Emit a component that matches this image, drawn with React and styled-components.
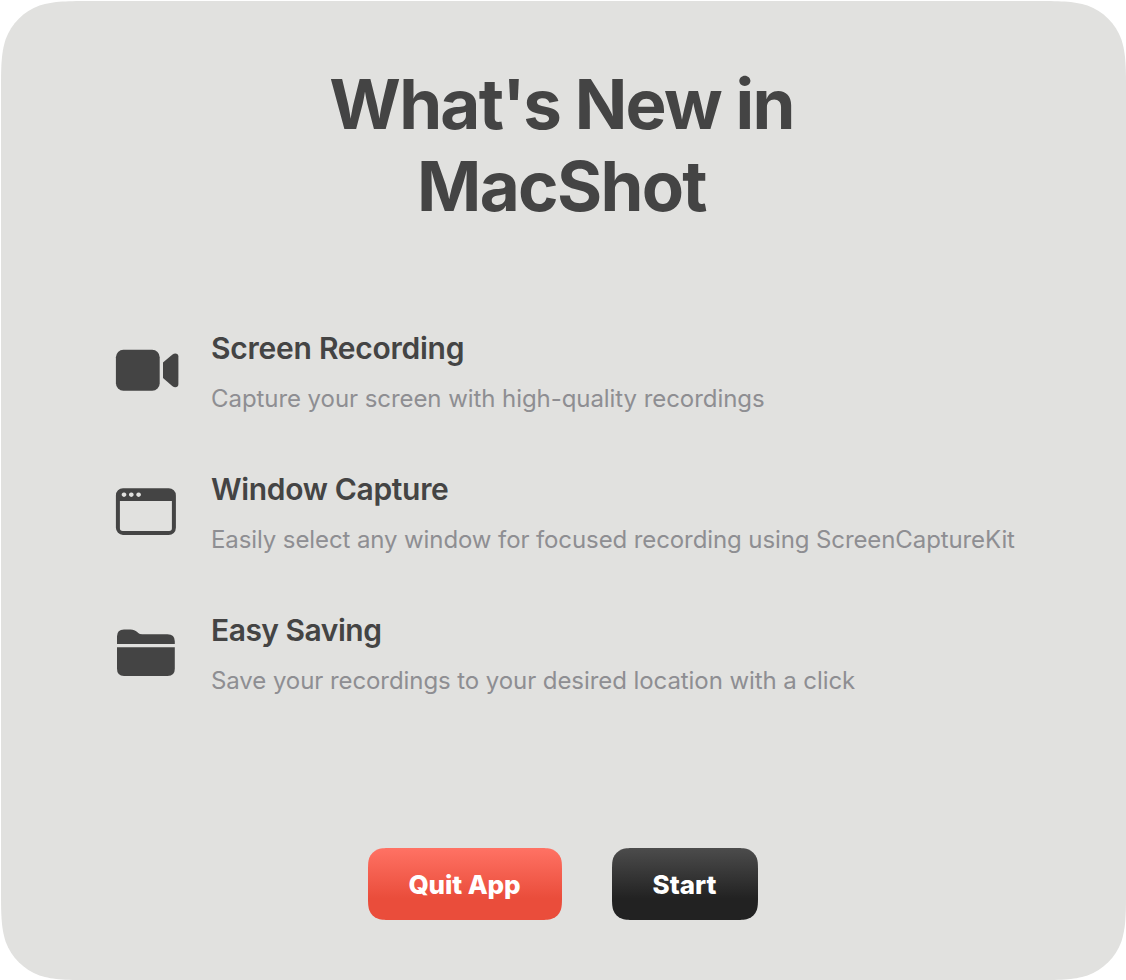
import React from 'react';
import styled, { createGlobalStyle } from 'styled-components';

const GlobalStyle = createGlobalStyle`
  * { box-sizing: border-box; }
  html, body { margin: 0; background: #ffffff; }
  body { font-family: Inter, "Liberation Sans", sans-serif; -webkit-font-smoothing: antialiased; }
`;

/* Rounded rectangle with continuous-curvature corners. */
const squircle = (w, h, r) => {
  const corner = [
    [1.5287, 0], [1.0885, 0], [0.8684, 0], [0.6315, 0.0749],
    [0.3728, 0.1691], [0.1691, 0.3728], [0.0749, 0.6315],
    [0, 0.8684], [0, 1.0885], [0, 1.5287],
  ];
  const seg = (pts, first) =>
    `${first}${pts[0]}C${pts.slice(1, 4).join(' ')}C${pts.slice(4, 7).join(' ')}C${pts.slice(7).join(' ')}`;
  const at = (fx, fy, flip) => {
    const list = corner.map(([a, b]) => [
      (fx ? w - a * r : a * r).toFixed(2),
      (fy ? h - b * r : b * r).toFixed(2),
    ].join(','));
    return flip ? list.reverse() : list;
  };
  return `path('${seg(at(1, 0, false), 'M')}${seg(at(1, 1, true), 'L')}${seg(at(0, 1, false), 'L')}${seg(at(0, 0, true), 'L')}Z')`;
};

const Panel = styled.main`
  display: flex;
  flex-direction: column;
  align-items: center;
  width: 1125px;
  height: 979px;
  margin: 1px 0 0 1px;
  padding-top: 62px;
  background: #e1e1df;
  color: #444444;
  clip-path: ${squircle(1125, 979, 61)};
`;

const Title = styled.h1`
  margin: 0;
  width: 600px;
  padding-right: 4px;
  font-size: 69px;
  font-weight: 720;
  line-height: 82px;
  text-align: center;
`;

const TitleLine = styled.span`
  display: block;
  letter-spacing: ${(p) => p.$tracking}px;
`;

const Features = styled.ul`
  display: flex;
  flex-direction: column;
  gap: 49px;
  width: 100%;
  margin: 99px 0 0;
  padding: 0 0 0 114px;
  list-style: none;
`;

const Feature = styled.li`
  display: flex;
  align-items: center;
  height: 92px;
`;

const FeatureIcon = styled.svg`
  flex: none;
  width: 64px;
  height: 56px;
  margin-right: 32px;
  margin-top: -4px;
  fill: #444444;
`;

const FeatureText = styled.div`
  white-space: nowrap;
`;

const FeatureName = styled.h2`
  margin: 0;
  font-size: 30px;
  font-weight: 600;
  line-height: 40px;
  letter-spacing: ${(p) => p.$tracking}px;
`;

const FeatureDetail = styled.p`
  margin: 13px 0 -1px;
  color: #8e8e92;
  font-size: 24px;
  line-height: 36px;
  letter-spacing: ${(p) => p.$tracking}px;
`;

const Actions = styled.div`
  display: flex;
  gap: 50px;
  margin: 148px 1px 0 0;
`;

const Button = styled.button`
  width: ${(p) => p.$width}px;
  height: 72px;
  padding: 1px 1px 0 0;
  border: 0;
  color: #ffffff;
  font: 800 26px/71px Inter, "Liberation Sans", sans-serif;
  letter-spacing: ${(p) => p.$tracking}px;
  background: linear-gradient(${(p) => p.$from}, ${(p) => p.$to} 70%);
  clip-path: ${(p) => squircle(p.$width, 72, 16)};
`;

const VideoIcon = () => (
  <FeatureIcon viewBox="0 0 64 56" aria-hidden="true">
    <rect x="0.9" y="7.8" width="43.8" height="41" rx="7.5" />
    <path d="M48 20.6 57.2 12.7C60 10.4 63.4 11.3 63.4 14.5V42C63.4 45.4 60 46.3 57.2 44L48 36Z" />
  </FeatureIcon>
);

const WindowIcon = () => (
  <FeatureIcon viewBox="0 0 64 56" aria-hidden="true">
    <path
      fillRule="evenodd"
      d="M8 5.2H53.7A7.2 7.2 0 0 1 60.9 12.4V44.8A7.2 7.2 0 0 1 53.7 52H8A7.2 7.2 0 0 1 .9 44.8V12.4A7.2 7.2 0 0 1 8 5.2ZM4.9 18V45A2.8 2.8 0 0 0 7.7 47.9H54A2.8 2.8 0 0 0 56.9 45V18ZM9 9.4a2.3 2.3 0 1 0 .01 0ZM16.3 9.4a2.3 2.3 0 1 0 .01 0ZM23.6 9.4a2.3 2.3 0 1 0 .01 0Z"
    />
  </FeatureIcon>
);

const FolderIcon = () => (
  <FeatureIcon viewBox="0 0 64 56" aria-hidden="true">
    <path d="M2 20V12.3Q2 5.4 9 5.4H15.5C18.6 5.4 20.2 6.3 22.2 8L23.2 8.9Q24.7 10.2 27.2 10.2H52.4Q59.8 10.2 59.8 17.3V20Z" />
    <path d="M2 23.2H59.8V44.8Q59.8 52 52.6 52H9Q2 52 2 44.8Z" />
  </FeatureIcon>
);

const features = [
  { Icon: VideoIcon, name: 'Screen Recording', nameTracking: -0.25, detail: 'Capture your screen with high-quality recordings', tracking: -0.065 },
  { Icon: WindowIcon, name: 'Window Capture', nameTracking: -0.33, detail: 'Easily select any window for focused recording using ScreenCaptureKit', tracking: -0.1 },
  { Icon: FolderIcon, name: 'Easy Saving', nameTracking: -0.5, detail: 'Save your recordings to your desired location with a click', tracking: -0.075 },
];

export default function App() {
  return (
    <>
      <GlobalStyle />
      <Panel>
        <Title>
          <TitleLine $tracking={-1.75}>What's New in</TitleLine>
          <TitleLine $tracking={-1.7}>MacShot</TitleLine>
        </Title>
        <Features>
          {features.map(({ Icon, name, nameTracking, detail, tracking }) => (
            <Feature key={name}>
              <Icon />
              <FeatureText>
                <FeatureName $tracking={nameTracking}>{name}</FeatureName>
                <FeatureDetail $tracking={tracking}>{detail}</FeatureDetail>
              </FeatureText>
            </Feature>
          ))}
        </Features>
        <Actions>
          <Button $width={194} $from="#ff7264" $to="#ea4d3b" $tracking={-0.1}>Quit App</Button>
          <Button $width={146} $from="#4c4c4c" $to="#222222" $tracking={0}>Start</Button>
        </Actions>
      </Panel>
    </>
  );
}
